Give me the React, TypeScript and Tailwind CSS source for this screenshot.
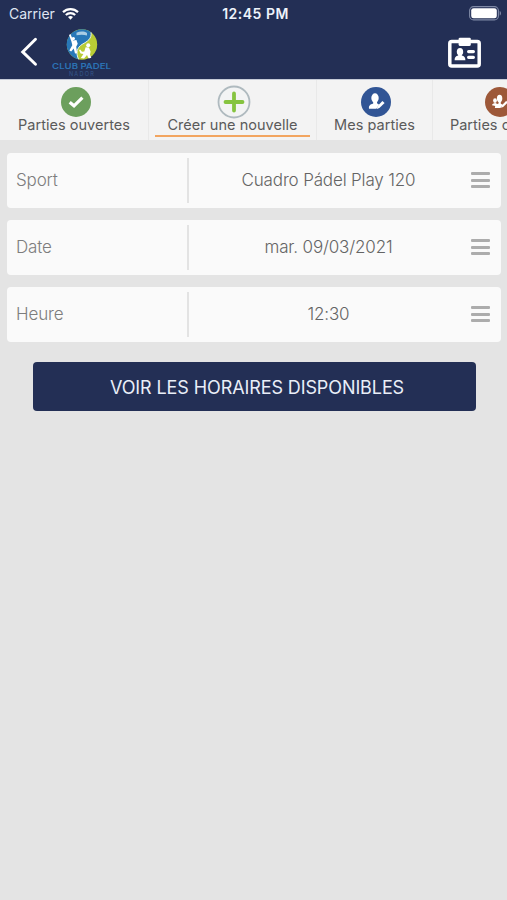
import type { ReactNode } from "react";

type Tab = {
  label: string;
  width: string;
  icon: ReactNode;
  active?: boolean;
};

function CheckBadge() {
  return (
    <svg width="30" height="30" viewBox="0 0 30 30" fill="none">
      <circle cx="15" cy="15" r="15" fill="#6c9f5d" />
      <path d="M8.700 15.200 13 18.800 21.400 10.600" stroke="#fff" strokeWidth="3.200" />
    </svg>
  );
}

function PlusBadge() {
  return (
    <svg width="34" height="34" viewBox="0 0 34 34" fill="none">
      <circle cx="17" cy="17" r="15.500" fill="#f3f4f4" stroke="#afbabf" strokeWidth="1.800" />
      <path d="M17 8.500v17M8.500 17h17" stroke="#86c440" strokeWidth="3.800" strokeLinecap="round" />
    </svg>
  );
}

function PlayerBadge() {
  return (
    <svg width="30" height="30" viewBox="0 0 30 30">
      <circle cx="15" cy="15" r="15" fill="#315595" />
      <ellipse cx="14" cy="11" rx="3.700" ry="4.700" fill="#fff" />
      <path d="M12.200 14h3.600l.4 2.600 1.800 1-2.600 4.200H8c-.4-3 .9-4.100 4.200-5.200z" fill="#fff" />
      <path d="m21.400 14 2.200 2-5.200 5-2.600 1 .8-2.900z" fill="#fff" />
    </svg>
  );
}

function GroupBadge() {
  return (
    <svg width="30" height="30" viewBox="0 0 30 30">
      <circle cx="15" cy="15" r="15" fill="#9d5839" />
      <ellipse cx="10" cy="13.600" rx="1.900" ry="2.300" fill="#fff" />
      <ellipse cx="14.600" cy="11.400" rx="2.700" ry="3.600" fill="#fff" />
      <path d="M7 18.200c.3-1.700 1.500-2 3.400-2.300l2 1.100 1.200-.4v-2.500h2.200v2.700l2 .9-2.400 3.200H10c-.2-1 0-1.300.3-2z" fill="#fff" />
      <path d="m21.300 13.800 1.700 1.600-4.800 4.600-2.200.8.700-2.400z" fill="#fff" />
    </svg>
  );
}

const tabs: Tab[] = [
  { label: "Parties ouvertes", width: "w-[149px]", icon: <CheckBadge /> },
  { label: "Créer une nouvelle", width: "w-[168px]", icon: <PlusBadge />, active: true },
  { label: "Mes parties", width: "w-[116px]", icon: <PlayerBadge /> },
  { label: "Parties closes", width: "w-[131px]", icon: <GroupBadge /> },
];

const fields = [
  { label: "Sport", value: "Cuadro Pádel Play 120" },
  { label: "Date", value: "mar. 09/03/2021" },
  { label: "Heure", value: "12:30" },
];

function StatusBar() {
  return (
    <div className="grid h-7 grid-cols-3 items-center pr-[5px] pl-[9px]">
      <div className="flex items-center gap-[7px] text-sm text-[#dfe5f2]">
        Carrier
        <svg className="mb-px" width="17" height="13" viewBox="0 0 17 13" fill="none" stroke="#fff">
          <path d="M1 5.100a10.700 10.700 0 0 1 15 0" strokeWidth="2.200" />
          <path d="M3.800 8a6.800 6.800 0 0 1 9.400 0" strokeWidth="2.100" />
          <path d="M6 10.100a3.600 3.600 0 0 1 5 0L8.500 12.700z" fill="#fff" stroke="none" />
        </svg>
      </div>
      <div className="text-center text-sm font-semibold tracking-[0.5px] text-[#eef3fb]">
        12:45 PM
      </div>
      <svg className="mb-[2px] justify-self-end" width="33" height="15" viewBox="0 0 33 15">
        <rect x=".6" y=".6" width="28.800" height="13.300" rx="4" fill="none" stroke="#7f89a6" strokeWidth="1.100" />
        <rect x="2.200" y="2.200" width="25.600" height="10.100" rx="2.400" fill="#fff" />
        <path d="M30.700 5c1.700.6 1.700 4 0 4.600z" fill="#7f89a6" />
      </svg>
    </div>
  );
}

function ClubLogo() {
  return (
    <div className="flex w-[60px] flex-col items-center pt-[1px]">
      <svg width="32" height="31" viewBox="0 0 32 31">
        <circle cx="16" cy="15.500" r="15.200" fill="#b8cc35" />
        <path d="M25 3.300A15.200 15.200 0 1 0 12.600 30.300C9.500 24 11 18.400 16.200 15.300 21.500 12.300 26 9.800 25 3.300z" fill="#2878b8" />
        <path d="M25 3.300c1 6.500-3.500 9-8.800 12-5.200 3.100-6.700 8.700-3.600 15" fill="none" stroke="#e8f2e8" strokeWidth="1" />
        <path d="M10.500 3.700c3.500-1.600 7.500-1.600 10.500.2v2.500c-3.500-1-7-1-10.500-.1z" fill="#a9cde4" />
        <circle cx="7.300" cy="9.600" r="1.700" fill="#fff" />
        <path d="m4.500 5 2.600 6.500 3.300-.5 1.300 3.800-1.500 3 1 6.500-2.200.3-1.300-5-2.500 3-1.900-1 3-5.300-.8-3.500L3 6z" fill="#fff" />
        <circle cx="22.200" cy="16.300" r="2" fill="#fff" />
        <path d="m19.600 18.300 3.300.2 1.700 4-.6 3.200 1.300 3-2.600.9-1.700-3.600-3 3.600-3.200-.5 2.600-4.200-2.800-.5-1.600-3.300 1.200-.6 1.800 2.200 2.300-.2z" fill="#fff" />
      </svg>
      <span className="mt-[2px] scale-x-[1.2] text-[8px] leading-[8px] font-semibold whitespace-nowrap text-[#2b72b4]">
        CLUB PADEL
      </span>
      <span className="mt-[1px] text-[5.500px] leading-[6px] tracking-[1.300px] text-[#36588c]">NADOR</span>
    </div>
  );
}

function NavBar() {
  return (
    <div className="flex items-start">
      <svg className="mt-[9px] ml-5" width="18" height="30" viewBox="0 0 18 30" fill="none">
        <path d="M15.500 2.200 2.700 14.900 15.500 27.200" stroke="#fff" strokeWidth="2.900" strokeLinecap="round" />
      </svg>
      <div className="ml-[14px]">
        <ClubLogo />
      </div>
      <svg className="mt-[9px] mr-[26px] ml-auto" width="33" height="31" viewBox="0 0 33 31">
        <rect x="1.800" y="4.600" width="29.400" height="24.300" rx="2" fill="none" stroke="#fff" strokeWidth="3.500" />
        <path d="M12 .8h9.600q1.200 0 1.200 1.200v5.400q0 1.600-1.600 1.600h-9q-1.600 0-1.600-1.600V2Q10.600.8 12 .8z" fill="#fff" />
        <ellipse cx="12" cy="14.700" rx="3.200" ry="3.800" fill="#fff" />
        <path d="M10.200 16.500h3.600v2.100c2.400.6 3.600 1.600 3.600 4.700H6.600c0-3.100 1.200-4.100 3.600-4.700z" fill="#fff" />
        <path d="M20.600 14.600h4.800M20.600 20.300h4.800" stroke="#fff" strokeWidth="3.200" strokeLinecap="round" />
      </svg>
    </div>
  );
}

function Tabs() {
  return (
    <nav className="flex h-[60px] overflow-hidden bg-[#f3f3f3]">
      {tabs.map((tab) => (
        <button
          key={tab.label}
          className={`flex shrink-0 flex-col items-center border-r border-[#e9e9e9] ${tab.width}`}
        >
          <span className="mt-[5px] flex h-[34px] items-center justify-center pl-[3px]">{tab.icon}</span>
          <span className="-mt-[2px] text-[14.500px] leading-[15px] tracking-[0.03px] whitespace-nowrap text-[#5a5a5a]">
            {tab.label}
          </span>
          {tab.active && <span className="mt-[3px] mr-px h-[2px] w-[155px] bg-[#f2a560]" />}
        </button>
      ))}
    </nav>
  );
}

function Field({ label, value }: { label: string; value: string }) {
  return (
    <button className="flex h-[55px] items-center rounded bg-[#fafafa] text-[17px] tracking-[-0.15px]">
      <span className="w-[180px] pt-[2px] pl-[9px] text-left font-light text-[#7d7d7d]">{label}</span>
      <span className="h-[45px] w-[2px] bg-[#e3e3e3]" />
      <span className="flex-1 pt-[1px] pr-[3px] text-center font-light text-[#646464]">{value}</span>
      <span className="mr-[11px] flex w-[19px] flex-col gap-[3.500px]">
        <span className="h-[3px] rounded-[1px] bg-[#acacac]" />
        <span className="h-[3px] rounded-[1px] bg-[#acacac]" />
        <span className="h-[3px] rounded-[1px] bg-[#acacac]" />
      </span>
    </button>
  );
}

export default function App() {
  return (
    <div className="flex min-h-screen w-full flex-col overflow-hidden bg-[#e4e4e4] font-['Inter',sans-serif]">
      <header className="h-[79px] bg-[#232f55]">
        <StatusBar />
        <NavBar />
      </header>
      <div className="h-px bg-[#c5cbd7]" />
      <Tabs />
      <main className="flex flex-col pt-[12.500px] pr-[6px] pl-[7px]">
        <div className="flex flex-col gap-3">
          {fields.map((field) => (
            <Field key={field.label} {...field} />
          ))}
        </div>
        <button className="mt-5 mr-[25px] ml-[26px] h-[49px] rounded bg-[#232f55] pt-[3px] pl-[5px] text-[18px] tracking-[-0.1px] text-[#e9eef8]">
          VOIR LES HORAIRES DISPONIBLES
        </button>
      </main>
    </div>
  );
}
